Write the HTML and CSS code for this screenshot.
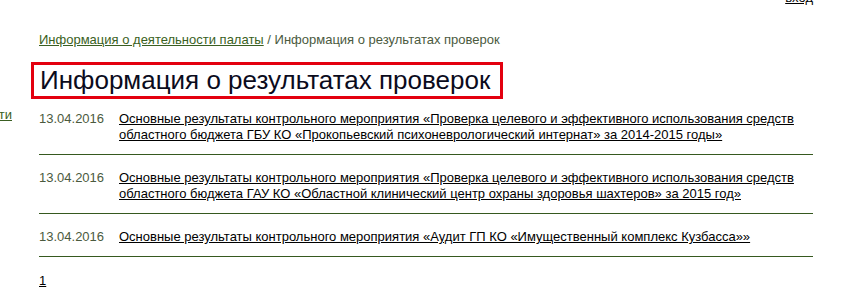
FILE: index.html
```html
<!DOCTYPE html>
<html lang="ru">
<head>
    <meta charset="UTF-8">
    <title>Информация о результатах проверок</title>
    <link rel="stylesheet" href="styles.css">
</head>
<body>
    <div class="top">
        <a href="#">вход</a>
    </div>

    <div class="page">
        <div class="aside">
            <a href="#" class="menu-link">О деятельности</a>
        </div>

        <div class="main">
            <div class="crumbs">
                <a href="#">Информация о деятельности палаты</a> / Информация о результатах проверок
            </div>

            <h1 class="title">Информация о результатах проверок</h1>

            <div class="news">
                <div class="news-item">
                    <div class="news-date">13.04.2016</div>
                    <a href="#" class="news-link">Основные результаты контрольного мероприятия «Проверка целевого и эффективного использования средств областного бюджета ГБУ КО «Прокопьевский психоневрологический интернат» за 2014-2015 годы»</a>
                </div>
                <div class="news-item">
                    <div class="news-date">13.04.2016</div>
                    <a href="#" class="news-link">Основные результаты контрольного мероприятия «Проверка целевого и эффективного использования средств областного бюджета ГАУ КО «Областной клинический центр охраны здоровья шахтеров» за 2015 год»</a>
                </div>
                <div class="news-item">
                    <div class="news-date">13.04.2016</div>
                    <a href="#" class="news-link">Основные результаты контрольного мероприятия «Аудит ГП КО «Имущественный комплекс Кузбасса»»</a>
                </div>
            </div>

            <div class="pager">
                <a href="#">1</a>
            </div>
        </div>
    </div>
</body>
</html>
```

FILE: styles.css
```css
body {
    margin: 0;
    font-family: "Liberation Sans", Arial, sans-serif;
    font-size: 13px;
    line-height: 16px;
    color: #000;
    background: #fff;
    overflow: hidden;
}

a {
    color: #000;
    text-decoration: underline;
}

.top {
    margin-top: -10px;
    height: 16px;
    padding-right: 30px;
    text-align: right;
}

.page {
    display: flex;
    align-items: flex-start;
}

.aside {
    width: 150px;
    margin-left: -138px;
    margin-top: 101px;
    text-align: right;
    flex-shrink: 0;
}

.menu-link {
    color: #3a5f22;
}

.main {
    width: 774px;
    margin-left: 27px;
}

.crumbs {
    margin-top: 26px;
    color: #4b5a3e;
}

.crumbs a {
    color: #3a5f22;
}

.title {
    width: fit-content;
    margin: 14px 0 0 -8px;
    padding: 2px 10px 2px 6px;
    border: 3px solid #e3000f;
    font-size: 26px;
    line-height: 27px;
    font-weight: normal;
    color: #0b0b1c;
}

.news {
    margin-top: -3px;
}

.news-item {
    display: flex;
    padding: 15px 0 11px;
    border-bottom: 1px solid #36591f;
}

.news-date {
    width: 80px;
    flex-shrink: 0;
    color: #4b5a3e;
}

.news-link {
    flex: 1;
    padding-right: 10px;
}

.pager {
    margin-top: 16px;
}
```
